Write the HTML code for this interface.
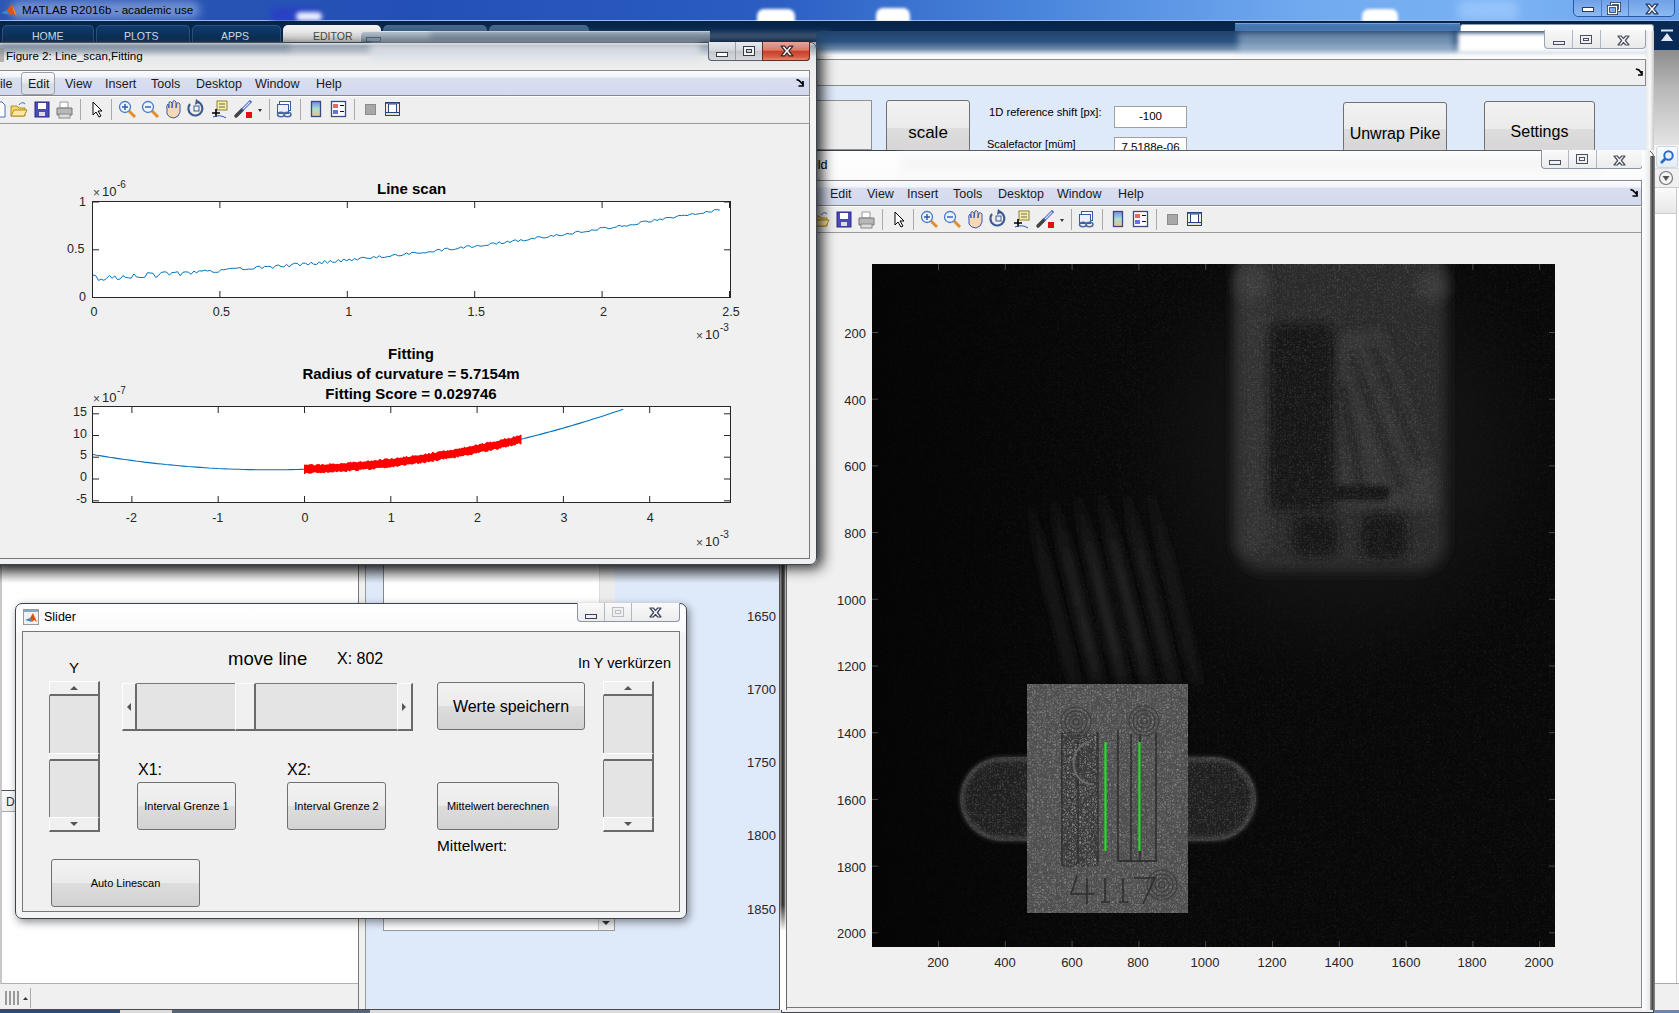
<!DOCTYPE html>
<html><head><meta charset="utf-8">
<style>
*{margin:0;padding:0;box-sizing:border-box}
html,body{width:1679px;height:1013px;overflow:hidden;background:#f0f0f0;font-family:"Liberation Sans",sans-serif;position:relative}
.a{position:absolute}
.t{position:absolute;white-space:nowrap;line-height:1}
svg{position:absolute;overflow:visible}
</style></head><body>

<div class="a" style="left:0px;top:20px;width:1679px;height:1px;background:#9ab8ec"></div>
<div class="a" style="left:0px;top:0px;width:1679px;height:20px;background:linear-gradient(90deg,#2c57b4 0%,#2350b6 25%,#2a5cc2 45%,#4a86dc 62%,#72aaf0 78%,#7ab2f4 90%,#6ca4ec 100%)"></div>
<div class="a" style="left:10px;top:1px;width:190px;height:18px;border-radius:9px;background:rgba(200,215,245,.45);filter:blur(4px)"></div>
<div class="a" style="left:270px;top:8px;width:50px;height:14px;border-radius:7px;background:#2a3cc8;filter:blur(3px);opacity:.8"></div>
<div class="a" style="left:296px;top:12px;width:26px;height:9px;border-radius:5px;background:#e8eeff;filter:blur(2px)"></div>
<div class="a" style="left:757px;top:9px;width:38px;height:14px;border-radius:7px 7px 0 0;background:#fff;filter:blur(1.5px)"></div>
<div class="a" style="left:876px;top:8px;width:34px;height:14px;border-radius:7px 7px 0 0;background:#fff;filter:blur(1.5px)"></div>
<div class="a" style="left:1362px;top:9px;width:36px;height:13px;border-radius:7px 7px 0 0;background:#fff;filter:blur(1.5px)"></div>
<div class="a" style="left:1458px;top:0px;width:60px;height:20px;border-radius:6px;background:#a8d0ff;filter:blur(5px);opacity:.6"></div>
<svg style="left:1px;top:3px" width="18" height="16" viewBox="0 0 18 16"><path d="M0 10 L6 7 L9 12 Z" fill="#3d86cf"/><path d="M6 7 L11 1 L16 14 L12 11 L9 12 Z" fill="#d8541b"/><path d="M11 1 L16 14 L13 9 Z" fill="#f4b02a"/></svg>
<div class="t" style="left:22px;top:4px;font-size:11.6px;color:#000;font-weight:normal;">MATLAB R2016b - academic use</div>
<div class="a" style="left:1573px;top:-3px;width:102px;height:20px;border:1px solid #2a55a8;border-radius:0 0 5px 5px;background:linear-gradient(#6c9ee6,#8dbaf2)"></div>
<div class="a" style="left:1601px;top:0px;width:1px;height:16px;background:#4c78c0"></div>
<div class="a" style="left:1628px;top:0px;width:1px;height:16px;background:#4c78c0"></div>
<div class="a" style="left:1582px;top:7px;width:12px;height:5px;background:#fff;border:1px solid #2b3a5a"></div>
<svg style="left:1607px;top:2px" width="14" height="13" viewBox="0 0 14 13"><rect x="4.5" y="1.5" width="8" height="7" fill="none" stroke="#2b3a5a" stroke-width="3"/><rect x="4.5" y="1.5" width="8" height="7" fill="none" stroke="#fff" stroke-width="1.3"/><rect x="1.5" y="4.5" width="8" height="7" fill="#7aaaf0" stroke="#2b3a5a" stroke-width="3"/><rect x="1.5" y="4.5" width="8" height="7" fill="none" stroke="#fff" stroke-width="1.3"/></svg>
<svg style="left:1645px;top:3px" width="14" height="12" viewBox="-0.5 -0.5 13 11"><path d="M0.5 0.5 H3.8 L6 3.2 L8.2 0.5 H11.5 L7.8 5 L11.5 9.5 H8.2 L6 6.8 L3.8 9.5 H0.5 L4.2 5 Z" fill="#fff" stroke="#2b3a5a" stroke-width="1.2" stroke-linejoin="round"/></svg>
<div class="a" style="left:0px;top:21px;width:1679px;height:21px;background:linear-gradient(#062448,#0a2b52)"></div>
<div class="a" style="left:2px;top:25px;width:92px;height:17px;border-radius:5px 5px 0 0;background:linear-gradient(#0f3a68,#0b305a);border:1px solid #2a5683;border-bottom:none"></div>
<div class="t" style="left:32px;top:31px;font-size:10.5px;color:#dfe6ee;font-weight:normal;">HOME</div>
<div class="a" style="left:96px;top:25px;width:94px;height:17px;border-radius:5px 5px 0 0;background:linear-gradient(#0f3a68,#0b305a);border:1px solid #2a5683;border-bottom:none"></div>
<div class="t" style="left:124px;top:31px;font-size:10.5px;color:#dfe6ee;font-weight:normal;">PLOTS</div>
<div class="a" style="left:192px;top:25px;width:89px;height:17px;border-radius:5px 5px 0 0;background:linear-gradient(#0f3a68,#0b305a);border:1px solid #2a5683;border-bottom:none"></div>
<div class="t" style="left:221px;top:31px;font-size:10.5px;color:#dfe6ee;font-weight:normal;">APPS</div>
<div class="a" style="left:283px;top:25px;width:98px;height:17px;border-radius:5px 5px 0 0;background:linear-gradient(#f4f4f4,#dadada)"></div>
<div class="t" style="left:313px;top:31px;font-size:10.5px;color:#4a4a4a;font-weight:normal;">EDITOR</div>
<div class="a" style="left:383px;top:25px;width:104px;height:8px;border-radius:5px 5px 0 0;background:linear-gradient(#47698e,#3a5a7e)"></div>
<div class="a" style="left:489px;top:25px;width:100px;height:8px;border-radius:5px 5px 0 0;background:linear-gradient(#47698e,#3a5a7e)"></div>
<div class="a" style="left:360px;top:31px;width:350px;height:11px;border-radius:5px 0 0 0;border-top:1px solid #dfe6ee;border-left:1px solid #dfe6ee;background:linear-gradient(#b8c4d0,#8898aa)"></div>
<div class="a" style="left:430px;top:33px;width:400px;height:7px;background:#6a7e96;filter:blur(3px);opacity:.7"></div>
<div class="a" style="left:366px;top:37px;width:15px;height:5px;background:#8aa6c4;border:1px solid #5a6a7a"></div>
<div class="a" style="left:0px;top:565px;width:358px;height:419px;background:#fff;border-left:2px solid #c8c8c8;border-bottom:1px solid #b0b0b0"></div>
<div class="a" style="left:0px;top:984px;width:358px;height:25px;background:#f0f0f0"></div>
<svg style="left:4px;top:990px" width="26" height="16" viewBox="0 0 26 16"><path d="M2 1V15M6 1V15M10 1V15M14 1V15" stroke="#9a9a9a" stroke-width="2"/><path d="M19 10 L24 10 L21.5 7 Z" fill="#333"/></svg>
<div class="a" style="left:30px;top:988px;width:1px;height:20px;background:#aaa"></div>
<div class="a" style="left:1px;top:790px;width:14px;height:22px;background:linear-gradient(#fafafa,#f0f0f0);border-top:1px solid #555;border-bottom:1px solid #aaa;border-left:1px solid #ccc"></div>
<div class="t" style="left:6px;top:796px;font-size:12px;color:#333;font-weight:normal;">D</div>
<div class="a" style="left:358px;top:565px;width:8px;height:445px;background:#f0f0f0;border-left:1px solid #777;border-right:1px solid #999"></div>
<div class="a" style="left:366px;top:565px;width:414px;height:445px;background:#dee9fa"></div>
<div class="a" style="left:383px;top:565px;width:216px;height:365px;background:#fff;border-left:1px solid #888"></div>
<div class="a" style="left:599px;top:565px;width:16px;height:365px;background:#ececec;border-left:1px solid #ddd"></div>
<div class="a" style="left:383px;top:918px;width:232px;height:13px;background:linear-gradient(#f4f4f4,#fff);border:1px solid #999;border-top:none"></div>
<div class="a" style="left:598px;top:918px;width:17px;height:13px;background:#f0f0f0;border-left:1px solid #ccc;border-bottom:1px solid #999;border-right:1px solid #999"></div>
<svg style="left:602px;top:921px" width="9" height="5"><path d="M0 0H8L4 4Z" fill="#333"/></svg>
<div class="t" style="left:730px;top:609.5px;width:46px;text-align:right;font-size:13px;color:#262626">1650</div>
<div class="t" style="left:730px;top:682.8px;width:46px;text-align:right;font-size:13px;color:#262626">1700</div>
<div class="t" style="left:730px;top:756.1px;width:46px;text-align:right;font-size:13px;color:#262626">1750</div>
<div class="t" style="left:730px;top:829.4px;width:46px;text-align:right;font-size:13px;color:#262626">1800</div>
<div class="t" style="left:730px;top:902.7px;width:46px;text-align:right;font-size:13px;color:#262626">1850</div>
<div class="a" style="left:779px;top:565px;width:8px;height:445px;background:linear-gradient(90deg,#aaa,#333 30%,#555 70%,#ddd)"></div>
<div class="a" style="left:780px;top:930px;width:6px;height:80px;background:linear-gradient(90deg,#eee,#fff)"></div>
<div class="a" style="left:0px;top:565px;width:816px;height:18px;background:linear-gradient(rgba(0,0,0,.45),rgba(0,0,0,0));"></div>
<div class="a" style="left:0px;top:1009px;width:1679px;height:4px;background:#dcdcdc;border-top:1px solid #4a4a4a"></div>
<div class="a" style="left:0px;top:1010px;width:120px;height:3px;background:#2a4a7a"></div>
<div class="a" style="left:172px;top:1010px;width:198px;height:3px;background:#56657a"></div>
<div class="a" style="left:1640px;top:1010px;width:39px;height:3px;background:#6a86b0"></div>
<div class="a" style="left:1235px;top:23px;width:225px;height:9px;background:linear-gradient(#4a7cb8,#3a6aa4);border-top:1px solid #7aa0d0"></div>
<div class="a" style="left:1460px;top:24px;width:194px;height:8px;background:#fff;border:1px solid #8a9ab0;border-bottom:none;border-radius:3px 3px 0 0"></div>
<div class="a" style="left:816px;top:31px;width:838px;height:30px;border-radius:6px 6px 0 0;background:linear-gradient(#20426c 0%,#2b5280 35%,#6d8aaa 60%,#f4f6f8 80%,#ffffff 100%)"></div>
<div class="a" style="left:1238px;top:33px;width:216px;height:20px;background:rgba(200,220,240,.45);filter:blur(3px)"></div>
<div class="a" style="left:1458px;top:33px;width:190px;height:20px;background:#fff;filter:blur(2px)"></div>
<div class="a" style="left:1544px;top:30px;width:102px;height:19px;border:1px solid #98a4b4;border-top:none;border-radius:0 0 4px 4px;background:linear-gradient(#f8f8f8,#eaeaea)"></div>
<div class="a" style="left:1572px;top:30px;width:1px;height:18px;background:#b0b8c4"></div>
<div class="a" style="left:1600px;top:30px;width:1px;height:18px;background:#b0b8c4"></div>
<div class="a" style="left:1553px;top:41px;width:12px;height:4px;border:1px solid #4a5060"></div>
<div class="a" style="left:1580px;top:35px;width:12px;height:9px;border:1px solid #4a5060;box-shadow:inset 0 0 0 2px #f0f0f0,inset 0 0 0 3px #4a5060"></div>
<svg style="left:1617px;top:35px" width="13" height="11" viewBox="-0.5 -0.5 13 11"><path d="M0.5 0.5 H3.8 L6 3.2 L8.2 0.5 H11.5 L7.8 5 L11.5 9.5 H8.2 L6 6.8 L3.8 9.5 H0.5 L4.2 5 Z" fill="#fff" stroke="#4a5060" stroke-width="1.2" stroke-linejoin="round"/></svg>
<div class="a" style="left:816px;top:59px;width:830px;height:27px;background:#efefef;border-top:1px solid #8a8a8a;border-bottom:1px solid #8a8a8a;border-right:1px solid #8a8a8a"></div>
<svg style="left:1636px;top:69px" width="8" height="7" viewBox="0 0 8 7"><path d="M0 0 L3 1 L6 5 M6 2 V6 H2" stroke="#000" stroke-width="1.6" fill="none"/></svg>
<div class="a" style="left:816px;top:86px;width:830px;height:64px;background:#dee9fa"></div>
<div class="a" style="left:1646px;top:31px;width:8px;height:119px;background:linear-gradient(90deg,#e8e8e8,#fafafa,#c8c8c8)"></div>
<div class="a" style="left:815px;top:100px;width:57px;height:50px;border:1px solid #909090;border-left:none;background:#eeeeee"></div>
<div class="a" style="left:886px;top:100px;width:84px;height:56px;border:1px solid #707070;border-radius:3px;background:linear-gradient(#f2f2f2 0%,#ebebeb 50%,#dddddd 51%,#d4d4d4 100%);"></div>
<div class="t" style="left:886px;top:124px;width:84px;text-align:center;font-size:17px;color:#000">scale</div>
<div class="t" style="left:989px;top:107px;font-size:11.2px;color:#000;font-weight:normal;">1D reference shift [px]:</div>
<div class="a" style="left:1114px;top:106px;width:73px;height:22px;background:#fff;border:1px solid #a0a0a0"></div>
<div class="t" style="left:1114px;top:111px;width:73px;text-align:center;font-size:11.5px">-100</div>
<div class="t" style="left:987px;top:139px;font-size:11px;color:#000;font-weight:normal;">Scalefactor [m&uuml;m]</div>
<div class="a" style="left:1114px;top:137px;width:73px;height:16px;background:#fff;border:1px solid #a0a0a0"></div>
<div class="t" style="left:1114px;top:142px;width:73px;text-align:center;font-size:11.5px">7.5188e-06</div>
<div class="a" style="left:1343px;top:102px;width:104px;height:54px;border:1px solid #707070;border-radius:3px;background:linear-gradient(#f2f2f2 0%,#ebebeb 50%,#dddddd 51%,#d4d4d4 100%);"></div>
<div class="t" style="left:1343px;top:126px;width:104px;text-align:center;font-size:16px;color:#000">Unwrap Pike</div>
<div class="a" style="left:1484px;top:101px;width:111px;height:55px;border:1px solid #707070;border-radius:3px;background:linear-gradient(#f2f2f2 0%,#ebebeb 50%,#dddddd 51%,#d4d4d4 100%);"></div>
<div class="t" style="left:1484px;top:124px;width:111px;text-align:center;font-size:16px;color:#000">Settings</div>
<div class="a" style="left:1654px;top:21px;width:25px;height:29px;background:#082a55"></div>
<svg style="left:1660px;top:29px" width="14" height="13" viewBox="0 0 14 13"><path d="M1 1.5H13" stroke="#dfe8f2" stroke-width="2"/><path d="M7 4 L13 12 H1 Z" fill="#dfe8f2"/></svg>
<div class="a" style="left:1654px;top:50px;width:25px;height:95px;background:linear-gradient(#8c8c8c,#b8b8b8 40%,#e4e4e4)"></div>
<div class="a" style="left:1654px;top:145px;width:25px;height:30px;background:#f4f4f4"></div>
<div class="a" style="left:1656px;top:146px;width:22px;height:22px;border:1px solid #cfd6de;border-radius:3px;background:linear-gradient(#f8fbff,#e4ecf6)"></div>
<svg style="left:1659px;top:149px" width="16" height="16" viewBox="0 0 16 16"><circle cx="9.5" cy="6.5" r="4.2" stroke="#2a6cc8" stroke-width="2" fill="#eaf2ff"/><path d="M6.5 9.5 L2 14" stroke="#2a6cc8" stroke-width="2.6"/></svg>
<div class="a" style="left:1654px;top:168px;width:25px;height:20px;background:#f0f0f0;border-top:1px solid #ddd;border-bottom:1px solid #ccc"></div>
<svg style="left:1658px;top:170px" width="16" height="16" viewBox="0 0 16 16"><circle cx="8" cy="8" r="6.5" stroke="#777" stroke-width="1.2" fill="#f4f4f4"/><path d="M4.5 6 H11.5 L8 11 Z" fill="#555"/></svg>
<div class="a" style="left:1654px;top:188px;width:25px;height:795px;background:#fff;border-left:1px solid #bbb"></div>
<div class="a" style="left:1655px;top:188px;width:22px;height:26px;background:linear-gradient(#fafafa,#e8e8e8);border-bottom:1px solid #ccc;border-right:1px solid #ccc"></div>
<div class="a" style="left:1676px;top:188px;width:1px;height:795px;background:#c8c8c8"></div>
<div class="a" style="left:1654px;top:983px;width:25px;height:27px;background:#f0f0f0;border-top:1px solid #aaa"></div>
<div class="a" style="left:781px;top:150px;width:873px;height:863px;border:1px solid #3c4450;border-radius:7px 7px 0 0;background:linear-gradient(#ffffff 0px,#fbfbfb 28px,#f0f0f0 30px)"></div>
<div class="a" style="left:900px;top:155px;width:700px;height:18px;background:#f6f6f6;filter:blur(4px)"></div>
<div class="t" style="left:815px;top:159px;font-size:12.5px;color:#000;font-weight:normal;">ild</div>
<div class="a" style="left:1541px;top:150px;width:102px;height:19px;border:1px solid #8a94a4;border-top:none;border-radius:0 0 4px 4px;background:linear-gradient(#fafafa,#ececec)"></div>
<div class="a" style="left:1568px;top:150px;width:1px;height:18px;background:#b0b8c4"></div>
<div class="a" style="left:1596px;top:150px;width:1px;height:18px;background:#b0b8c4"></div>
<div class="a" style="left:1549px;top:160px;width:12px;height:5px;border:1px solid #4a5060"></div>
<div class="a" style="left:1576px;top:154px;width:12px;height:10px;border:1px solid #4a5060;box-shadow:inset 0 0 0 2px #f0f0f0,inset 0 0 0 3px #4a5060"></div>
<svg style="left:1613px;top:155px" width="13" height="11" viewBox="-0.5 -0.5 13 11"><path d="M0.5 0.5 H3.8 L6 3.2 L8.2 0.5 H11.5 L7.8 5 L11.5 9.5 H8.2 L6 6.8 L3.8 9.5 H0.5 L4.2 5 Z" fill="#fff" stroke="#4a5060" stroke-width="1.2" stroke-linejoin="round"/></svg>
<div class="a" style="left:787px;top:180px;width:855px;height:26px;border:1px solid #888;border-left:none;background:linear-gradient(#fafbfe 0%,#f2f4fa 25%,#d8ddef 30%,#d4daee 100%)"></div>
<div class="t" style="left:802px;top:188px;font-size:12.5px;color:#1a1a1a;font-weight:normal;">ile</div>
<div class="t" style="left:830px;top:188px;font-size:12.5px;color:#1a1a1a;font-weight:normal;">Edit</div>
<div class="t" style="left:867px;top:188px;font-size:12.5px;color:#1a1a1a;font-weight:normal;">View</div>
<div class="t" style="left:907px;top:188px;font-size:12.5px;color:#1a1a1a;font-weight:normal;">Insert</div>
<div class="t" style="left:953px;top:188px;font-size:12.5px;color:#1a1a1a;font-weight:normal;">Tools</div>
<div class="t" style="left:998px;top:188px;font-size:12.5px;color:#1a1a1a;font-weight:normal;">Desktop</div>
<div class="t" style="left:1057px;top:188px;font-size:12.5px;color:#1a1a1a;font-weight:normal;">Window</div>
<div class="t" style="left:1118px;top:188px;font-size:12.5px;color:#1a1a1a;font-weight:normal;">Help</div>
<svg style="left:1630px;top:189px" width="9" height="8" viewBox="0 0 9 8"><path d="M0.5 0.5 L3 1.5 L7 5.5 M7 2 V7 H2.5" stroke="#000" stroke-width="1.7" fill="none"/></svg>
<div class="a" style="left:787px;top:206px;width:855px;height:27px;background:#efefef;border-top:1px solid #fff;border-right:1px solid #888;border-bottom:1px solid #9a9a9a"></div>
<svg style="left:802px;top:110px" width="420" height="130"><path d="M-6 102 H2 L5 105 V117 H-6 Z" fill="#fff" stroke="#4a6fa8" stroke-width="1"/><path d="M11 106 H17 L19 108 H25 V116 H11 Z" fill="#f6d66a" stroke="#b08a20" stroke-width="1"/><path d="M11 116 L14 110 H27 L24 116 Z" fill="#fbe9a0" stroke="#b08a20" stroke-width="1"/><path d="M19 105 Q22 101 25 104" stroke="#6a8ab8" stroke-width="1.2" fill="none"/><rect x="35" y="102" width="14" height="15" fill="#4a4ab8" stroke="#2a2a7a"/><rect x="38" y="103" width="8" height="6" fill="#fff"/><rect x="39" y="112" width="6" height="4" fill="#ddd"/><path d="M60 102 H68 V108 H60 Z" fill="#fff" stroke="#999"/><path d="M57 108 H72 V115 H57 Z" fill="#b8b8b8" stroke="#777"/><rect x="59" y="114" width="11" height="4" fill="#ddd" stroke="#888"/><path d="M80.5 99 V120" stroke="#aaa"/><path d="M93 102 V115 L96 112 L99 117 L101 116 L98 111 L102 111 Z" fill="#fff" stroke="#000" stroke-width="1"/><path d="M111.5 99 V120" stroke="#aaa"/><path d="M129 111 L135 117" stroke="#e0902a" stroke-width="3"/><circle cx="125" cy="107" r="5.5" fill="#eef4ff" stroke="#4a7ac8" stroke-width="1.3"/><path d="M122 107 H128 M125 104 V110" stroke="#2a5ab0" stroke-width="1.4"/><path d="M152 111 L158 117" stroke="#e0902a" stroke-width="3"/><circle cx="148" cy="107" r="5.5" fill="#eef4ff" stroke="#4a7ac8" stroke-width="1.3"/><path d="M145 107 H151" stroke="#2a5ab0" stroke-width="1.4"/><path d="M167 110 Q166 105 168 104 L169 108 L169 102 Q171 101 172 103 L172 108 L173 101 Q175 100 176 102 L176 108 L177 103 Q179 102 180 104 L180 112 Q179 117 174 118 Q169 118 167 114 Z" fill="#f6d8b8" stroke="#3a5ab0" stroke-width="1"/><path d="M190 104 A7 7 0 1 0 198 102" stroke="#3a5a90" stroke-width="2.2" fill="none"/><path d="M196 99 L200 102 L195 105 Z" fill="#3a5a90"/><rect x="194" y="106" width="5" height="5" fill="none" stroke="#3a5a90"/><rect x="217" y="101" width="10" height="9" fill="#f8f0a0" stroke="#8a8040"/><path d="M219 104 H225 M219 107 H225" stroke="#666"/><path d="M212 113 H220 M216 109 V117" stroke="#000" stroke-width="1.6"/><path d="M213 117 Q220 114 226 118" stroke="#3050c0" fill="none"/><path d="M236 116 L242 110" stroke="#444" stroke-width="3.5" stroke-linecap="round"/><path d="M242 110 L251 101" stroke="#3a5ab8" stroke-width="3"/><path d="M243 109 L250 102" stroke="#dfe6ff" stroke-width="1.2"/><rect x="246" y="112" width="6" height="6" fill="#e01010"/><path d="M258 109 H262 L260 112 Z" fill="#333"/><path d="M269.5 99 V120" stroke="#aaa"/><rect x="279.5" y="101.5" width="11" height="9" fill="#fff" stroke="#3a5a98"/><rect x="277.5" y="104.5" width="11" height="9" fill="#eef" stroke="#3a5a98"/><ellipse cx="281" cy="114.5" rx="3.5" ry="2.2" fill="none" stroke="#4a6aa8" stroke-width="1.5"/><ellipse cx="287.5" cy="114.5" rx="3.5" ry="2.2" fill="none" stroke="#4a6aa8" stroke-width="1.5"/><path d="M300.5 99 V120" stroke="#aaa"/><defs><linearGradient id="cb802" x1="0" y1="0" x2="0" y2="1"><stop offset="0" stop-color="#7a88e8"/><stop offset=".5" stop-color="#a8e0d0"/><stop offset="1" stop-color="#f4c080"/></linearGradient></defs><rect x="311.5" y="101.5" width="9" height="15" fill="url(#cb802)" stroke="#3a4a80" stroke-width="1.3"/><rect x="331.5" y="101.5" width="14" height="15" fill="#fff" stroke="#3a4a80" stroke-width="1.3"/><rect x="333" y="104" width="5" height="4" fill="#e06a6a"/><rect x="333" y="110" width="5" height="4" fill="#6a70e0"/><path d="M340 105.5 H344 M340 111.5 H344" stroke="#111" stroke-width="1.2"/><path d="M354.5 99 V120" stroke="#aaa"/><rect x="365.5" y="104.5" width="10" height="10" fill="#a8a8a8" stroke="#8c8c8c"/><rect x="385" y="102" width="15" height="14" fill="#2a4080"/><rect x="386" y="103" width="13" height="1" fill="#4a70c8"/><rect x="386" y="104" width="2" height="8" fill="#f4f0e0"/><rect x="397" y="104" width="2" height="8" fill="#f4f0e0"/><rect x="389" y="104.5" width="7" height="7.5" fill="#fff"/><rect x="386" y="113" width="13" height="2" fill="#e8e0c0"/></svg>
<div class="a" style="left:787px;top:233px;width:855px;height:775px;background:#f0f0f0;border-right:1px solid #888;border-bottom:1px solid #777"></div>
<div class="a" style="left:1642px;top:150px;width:8px;height:860px;background:linear-gradient(90deg,#fff,#f4f6f8 50%,#e8e8e8)"></div>
<div class="a" style="left:1650px;top:156px;width:5px;height:854px;background:linear-gradient(90deg,#999,#4a4a4a 50%,#888)"></div>
<div class="a" style="left:779px;top:560px;width:8px;height:450px;border-left:1px solid #555;border-right:1px solid #666;background:#fff"></div>
<div class="a" style="left:780px;top:560px;width:6px;height:371px;background:linear-gradient(90deg,#999,#333 40%,#444 70%,#ddd)"></div>
<div class="a" style="left:780px;top:905px;width:6px;height:26px;background:linear-gradient(rgba(255,255,255,0),#fff)"></div>
<svg style="left:872px;top:264px" width="683" height="683"><defs><filter id="b2" filterUnits="userSpaceOnUse" x="-200" y="-200" width="1100" height="1100"><feGaussianBlur stdDeviation="2"/></filter><filter id="b6" filterUnits="userSpaceOnUse" x="-200" y="-200" width="1100" height="1100"><feGaussianBlur stdDeviation="6"/></filter><filter id="b15" filterUnits="userSpaceOnUse" x="-200" y="-200" width="1100" height="1100"><feGaussianBlur stdDeviation="15"/></filter><filter id="b30" filterUnits="userSpaceOnUse" x="-200" y="-200" width="1100" height="1100"><feGaussianBlur stdDeviation="30"/></filter><filter id="nz" x="0" y="0" width="100%" height="100%"><feTurbulence type="fractalNoise" baseFrequency="0.9" numOctaves="1" seed="3"/><feColorMatrix type="matrix" values="0 0 0 0 1  0 0 0 0 1  0 0 0 0 1  1.2 0 0 0 -0.55"/></filter><clipPath id="ic"><rect x="0" y="0" width="683" height="683"/></clipPath></defs><g clip-path="url(#ic)"><rect x="0" y="0" width="683" height="683" fill="#080808"/><filter id="tx" x="0" y="0" width="100%" height="100%"><feTurbulence type="turbulence" baseFrequency="0.4" numOctaves="2" seed="5" result="n"/><feColorMatrix in="n" type="matrix" values="0 0 0 0 1  0 0 0 0 1  0 0 0 0 1  0 0 0 1.8 -0.3" result="w"/><feComposite in="w" in2="SourceGraphic" operator="in"/></filter><filter id="b4" filterUnits="userSpaceOnUse" x="-200" y="-200" width="1100" height="1100"><feGaussianBlur stdDeviation="4"/></filter><rect x="0" y="0" width="683" height="683" fill="#fff" opacity=".05" filter="url(#tx)"/><linearGradient id="lg" x1="0" x2="1" y1="0" y2="0"><stop offset="0" stop-color="#030303" stop-opacity=".7"/><stop offset="1" stop-color="#030303" stop-opacity="0"/></linearGradient><rect x="0" y="0" width="260" height="683" fill="url(#lg)"/><radialGradient id="gl"><stop offset="0" stop-color="#1a1a1a" stop-opacity="1"/><stop offset=".6" stop-color="#161616" stop-opacity=".6"/><stop offset="1" stop-color="#111" stop-opacity="0"/></radialGradient><ellipse cx="470" cy="190" rx="230" ry="240" fill="url(#gl)"/><rect x="362" y="-40" width="213" height="348" rx="30" fill="#2a2a2a" filter="url(#b6)"/><rect x="366" y="0" width="30" height="290" rx="10" fill="#333" filter="url(#b6)"/><circle cx="380" cy="20" r="16" fill="#3a3a3a" filter="url(#b6)"/><circle cx="560" cy="22" r="16" fill="#383838" filter="url(#b6)"/><rect x="398" y="60" width="64" height="186" rx="10" fill="#151515" filter="url(#b4)"/><path d="M468 70 L510 65 L565 215 L565 245 L468 245 Z" fill="#363636" filter="url(#b4)"/><path d="M480 90 L530 225 M500 80 L548 200 M470 120 L490 230" stroke="#1c1c1c" stroke-width="6" filter="url(#b4)"/><rect x="420" y="252" width="45" height="40" rx="12" fill="#151515" filter="url(#b4)"/><rect x="490" y="250" width="45" height="45" rx="12" fill="#161616" filter="url(#b4)"/><rect x="458" y="222" width="60" height="14" rx="6" fill="#121212" filter="url(#b2)"/><mask id="gm" maskUnits="userSpaceOnUse" x="0" y="0" width="683" height="683"><rect x="368" y="-30" width="200" height="330" rx="30" fill="#fff" filter="url(#b6)"/></mask><rect x="340" y="0" width="260" height="340" fill="#fff" opacity=".12" filter="url(#tx)" mask="url(#gm)"/><linearGradient id="sg" x1="0" y1="0" x2="0" y2="1"><stop offset="0" stop-color="#2a2a2a" stop-opacity="0"/><stop offset=".35" stop-color="#2a2a2a" stop-opacity=".9"/><stop offset=".8" stop-color="#2a2a2a" stop-opacity="1"/><stop offset="1" stop-color="#2a2a2a" stop-opacity=".6"/></linearGradient><g filter="url(#b4)"><path d="M150 232 L161 232 L208 420 L197 420 Z" fill="url(#sg)" opacity="0.55"/><path d="M174 229 L185 229 L232 420 L221 420 Z" fill="url(#sg)" opacity="0.80"/><path d="M198 226 L209 226 L257 420 L246 420 Z" fill="url(#sg)" opacity="0.85"/><path d="M222 223 L233 223 L282 420 L271 420 Z" fill="url(#sg)" opacity="0.85"/><path d="M246 220 L257 220 L307 420 L296 420 Z" fill="url(#sg)" opacity="0.70"/><path d="M270 217 L281 217 L331 420 L320 420 Z" fill="url(#sg)" opacity="0.50"/></g><rect x="88" y="493" width="112" height="84" rx="42" fill="#1e1e1e"/><rect x="272" y="493" width="112" height="84" rx="42" fill="#1e1e1e"/><rect x="90" y="495" width="108" height="80" rx="40" fill="none" stroke="#444" stroke-width="4" filter="url(#b2)"/><rect x="274" y="495" width="108" height="80" rx="40" fill="none" stroke="#444" stroke-width="4" filter="url(#b2)"/><rect x="88" y="493" width="112" height="84" rx="42" fill="#fff" opacity=".18" filter="url(#tx)"/><rect x="272" y="493" width="112" height="84" rx="42" fill="#fff" opacity=".18" filter="url(#tx)"/><rect x="155" y="420" width="161" height="229" fill="#4e4e4e"/><rect x="155" y="420" width="161" height="229" fill="#000" opacity=".30" filter="url(#tx)"/><rect x="189" y="468" width="37" height="135" fill="#3a3a3a"/><rect x="189" y="468" width="37" height="135" fill="#8a8a8a" opacity=".45" filter="url(#tx)"/><path d="M190 468 V602 M206 470 V600 M226 468 V602" stroke="#2a2a2a" stroke-width="1.2"/><path d="M218 478 A14 16 0 0 0 222 520" stroke="#6a6a6a" stroke-width="2" fill="none"/><path d="M246 466 V597 H284 V468 M259 470 V597 M268 470 V597" stroke="#262626" stroke-width="1.3" fill="none"/><circle cx="204" cy="458" r="3" fill="none" stroke="#3c3c3c" stroke-width="1.1"/><circle cx="204" cy="458" r="7" fill="none" stroke="#3c3c3c" stroke-width="1.1"/><circle cx="204" cy="458" r="11" fill="none" stroke="#3c3c3c" stroke-width="1.1"/><circle cx="204" cy="458" r="15" fill="none" stroke="#3c3c3c" stroke-width="1.1"/><circle cx="272" cy="457" r="3" fill="none" stroke="#3c3c3c" stroke-width="1.1"/><circle cx="272" cy="457" r="7" fill="none" stroke="#3c3c3c" stroke-width="1.1"/><circle cx="272" cy="457" r="11" fill="none" stroke="#3c3c3c" stroke-width="1.1"/><circle cx="272" cy="457" r="15" fill="none" stroke="#3c3c3c" stroke-width="1.1"/><circle cx="290" cy="621" r="3" fill="none" stroke="#3c3c3c" stroke-width="1.1"/><circle cx="290" cy="621" r="7" fill="none" stroke="#3c3c3c" stroke-width="1.1"/><circle cx="290" cy="621" r="11" fill="none" stroke="#3c3c3c" stroke-width="1.1"/><circle cx="290" cy="621" r="15" fill="none" stroke="#3c3c3c" stroke-width="1.1"/><path d="M205 612 L199 630 H222 M215 614 V640 M233 614 V638 M229 638 H238 M251 614 V638 M247 638 H256 M262 614 H283 L271 640" stroke="#2e2e2e" stroke-width="1.6" fill="none"/><path d="M233.5 478 V587 M267.5 478 V587" stroke="#22e022" stroke-width="2.2"/><path d="M0 68.5 H6 M683 68.5 H677 M66.5 683 V677 M66.5 0 V6" stroke="#4a4a4a" stroke-width="1"/><path d="M0 135.2 H6 M683 135.2 H677 M133.3 683 V677 M133.3 0 V6" stroke="#4a4a4a" stroke-width="1"/><path d="M0 201.9 H6 M683 201.9 H677 M200.1 683 V677 M200.1 0 V6" stroke="#4a4a4a" stroke-width="1"/><path d="M0 268.6 H6 M683 268.6 H677 M266.9 683 V677 M266.9 0 V6" stroke="#4a4a4a" stroke-width="1"/><path d="M0 335.3 H6 M683 335.3 H677 M333.7 683 V677 M333.7 0 V6" stroke="#4a4a4a" stroke-width="1"/><path d="M0 402.0 H6 M683 402.0 H677 M400.5 683 V677 M400.5 0 V6" stroke="#4a4a4a" stroke-width="1"/><path d="M0 468.7 H6 M683 468.7 H677 M467.3 683 V677 M467.3 0 V6" stroke="#4a4a4a" stroke-width="1"/><path d="M0 535.4 H6 M683 535.4 H677 M534.1 683 V677 M534.1 0 V6" stroke="#4a4a4a" stroke-width="1"/><path d="M0 602.1 H6 M683 602.1 H677 M600.9 683 V677 M600.9 0 V6" stroke="#4a4a4a" stroke-width="1"/><path d="M0 668.8 H6 M683 668.8 H677 M667.7 683 V677 M667.7 0 V6" stroke="#4a4a4a" stroke-width="1"/></g></svg>
<div class="t" style="left:819px;top:327px;width:47px;text-align:right;font-size:13px;color:#262626">200</div>
<div class="t" style="left:913px;top:956px;width:50px;text-align:center;font-size:13px;color:#262626">200</div>
<div class="t" style="left:819px;top:394px;width:47px;text-align:right;font-size:13px;color:#262626">400</div>
<div class="t" style="left:980px;top:956px;width:50px;text-align:center;font-size:13px;color:#262626">400</div>
<div class="t" style="left:819px;top:460px;width:47px;text-align:right;font-size:13px;color:#262626">600</div>
<div class="t" style="left:1047px;top:956px;width:50px;text-align:center;font-size:13px;color:#262626">600</div>
<div class="t" style="left:819px;top:527px;width:47px;text-align:right;font-size:13px;color:#262626">800</div>
<div class="t" style="left:1113px;top:956px;width:50px;text-align:center;font-size:13px;color:#262626">800</div>
<div class="t" style="left:819px;top:594px;width:47px;text-align:right;font-size:13px;color:#262626">1000</div>
<div class="t" style="left:1180px;top:956px;width:50px;text-align:center;font-size:13px;color:#262626">1000</div>
<div class="t" style="left:819px;top:660px;width:47px;text-align:right;font-size:13px;color:#262626">1200</div>
<div class="t" style="left:1247px;top:956px;width:50px;text-align:center;font-size:13px;color:#262626">1200</div>
<div class="t" style="left:819px;top:727px;width:47px;text-align:right;font-size:13px;color:#262626">1400</div>
<div class="t" style="left:1314px;top:956px;width:50px;text-align:center;font-size:13px;color:#262626">1400</div>
<div class="t" style="left:819px;top:794px;width:47px;text-align:right;font-size:13px;color:#262626">1600</div>
<div class="t" style="left:1381px;top:956px;width:50px;text-align:center;font-size:13px;color:#262626">1600</div>
<div class="t" style="left:819px;top:861px;width:47px;text-align:right;font-size:13px;color:#262626">1800</div>
<div class="t" style="left:1447px;top:956px;width:50px;text-align:center;font-size:13px;color:#262626">1800</div>
<div class="t" style="left:819px;top:927px;width:47px;text-align:right;font-size:13px;color:#262626">2000</div>
<div class="t" style="left:1514px;top:956px;width:50px;text-align:center;font-size:13px;color:#262626">2000</div>
<div class="a" style="left:-10px;top:42px;width:827px;height:523px;box-shadow:5px 3px 14px rgba(0,0,0,.85);border:1px solid #3c4450;border-radius:0 7px 7px 0;background:linear-gradient(#dfe3e8 0px,#9aa6b4 3px,#b4bec8 8px,#e6e8ea 14px,#eeeeee 26px,#f4f4f4 60px,#f0f0f0 100%)"></div>
<div class="a" style="left:0px;top:43px;width:290px;height:8px;background:#6a7a8a;filter:blur(3px);opacity:.5"></div>
<div class="a" style="left:370px;top:44px;width:330px;height:16px;background:#dde2e8;filter:blur(3px);opacity:.8"></div>
<div class="t" style="left:6px;top:50px;font-size:11.6px;color:#000;font-weight:normal;">Figure 2: Line_scan,Fitting</div>
<div class="a" style="left:0px;top:48px;width:4px;height:14px;background:#888;opacity:.6"></div>
<div class="a" style="left:708px;top:42px;width:102px;height:19px;border:1px solid #5a6070;border-top:none;border-radius:0 0 4px 4px;background:linear-gradient(#e6e8ec,#d2d6dc 50%,#c4c8ce 52%,#d6d8dc)"></div>
<div class="a" style="left:762px;top:42px;width:48px;height:19px;border:1px solid #6a2a20;border-top:none;border-radius:0 0 4px 0;background:linear-gradient(#e8a598 0%,#dc7a66 45%,#c8402a 52%,#d45a40 80%,#e08a70 100%)"></div>
<div class="a" style="left:735px;top:42px;width:1px;height:18px;background:#9aa0a8"></div>
<div class="a" style="left:716px;top:52px;width:12px;height:5px;border:1px solid #333a48;background:#fff"></div>
<div class="a" style="left:743px;top:46px;width:12px;height:10px;border:1px solid #333a48;box-shadow:inset 0 0 0 2px #f0f0f0,inset 0 0 0 3px #333a48"></div>
<svg style="left:780px;top:45px" width="14" height="12" viewBox="-0.5 -0.5 13 11"><path d="M0.5 0.5 H3.8 L6 3.2 L8.2 0.5 H11.5 L7.8 5 L11.5 9.5 H8.2 L6 6.8 L3.8 9.5 H0.5 L4.2 5 Z" fill="#fff" stroke="#3a2a2a" stroke-width="1.2" stroke-linejoin="round"/></svg>
<div class="a" style="left:0px;top:70px;width:810px;height:26px;border:1px solid #888;border-left:none;background:linear-gradient(#fafbfe 0%,#f2f4fa 25%,#d8ddef 30%,#d4daee 100%)"></div>
<div class="a" style="left:21px;top:72px;width:34px;height:23px;border:1px solid #9aa0b0;border-radius:3px;background:linear-gradient(#fbfbfc,#e8e8ee 45%,#d8dae4 55%,#dcdee8)"></div>
<div class="t" style="left:0px;top:78px;font-size:12.5px;color:#1a1a1a;font-weight:normal;">ile</div>
<div class="t" style="left:28px;top:78px;font-size:12.5px;color:#1a1a1a;font-weight:normal;">Edit</div>
<div class="t" style="left:65px;top:78px;font-size:12.5px;color:#1a1a1a;font-weight:normal;">View</div>
<div class="t" style="left:105px;top:78px;font-size:12.5px;color:#1a1a1a;font-weight:normal;">Insert</div>
<div class="t" style="left:151px;top:78px;font-size:12.5px;color:#1a1a1a;font-weight:normal;">Tools</div>
<div class="t" style="left:196px;top:78px;font-size:12.5px;color:#1a1a1a;font-weight:normal;">Desktop</div>
<div class="t" style="left:255px;top:78px;font-size:12.5px;color:#1a1a1a;font-weight:normal;">Window</div>
<div class="t" style="left:316px;top:78px;font-size:12.5px;color:#1a1a1a;font-weight:normal;">Help</div>
<svg style="left:796px;top:79px" width="9" height="8" viewBox="0 0 9 8"><path d="M0.5 0.5 L3 1.5 L7 5.5 M7 2 V7 H2.5" stroke="#000" stroke-width="1.7" fill="none"/></svg>
<div class="a" style="left:0px;top:96px;width:810px;height:28px;background:#efefef;border-top:1px solid #fff;border-right:1px solid #888;border-bottom:1px solid #9a9a9a"></div>
<svg style="left:0px;top:0px" width="420" height="130"><path d="M-6 102 H2 L5 105 V117 H-6 Z" fill="#fff" stroke="#4a6fa8" stroke-width="1"/><path d="M11 106 H17 L19 108 H25 V116 H11 Z" fill="#f6d66a" stroke="#b08a20" stroke-width="1"/><path d="M11 116 L14 110 H27 L24 116 Z" fill="#fbe9a0" stroke="#b08a20" stroke-width="1"/><path d="M19 105 Q22 101 25 104" stroke="#6a8ab8" stroke-width="1.2" fill="none"/><rect x="35" y="102" width="14" height="15" fill="#4a4ab8" stroke="#2a2a7a"/><rect x="38" y="103" width="8" height="6" fill="#fff"/><rect x="39" y="112" width="6" height="4" fill="#ddd"/><path d="M60 102 H68 V108 H60 Z" fill="#fff" stroke="#999"/><path d="M57 108 H72 V115 H57 Z" fill="#b8b8b8" stroke="#777"/><rect x="59" y="114" width="11" height="4" fill="#ddd" stroke="#888"/><path d="M80.5 99 V120" stroke="#aaa"/><path d="M93 102 V115 L96 112 L99 117 L101 116 L98 111 L102 111 Z" fill="#fff" stroke="#000" stroke-width="1"/><path d="M111.5 99 V120" stroke="#aaa"/><path d="M129 111 L135 117" stroke="#e0902a" stroke-width="3"/><circle cx="125" cy="107" r="5.5" fill="#eef4ff" stroke="#4a7ac8" stroke-width="1.3"/><path d="M122 107 H128 M125 104 V110" stroke="#2a5ab0" stroke-width="1.4"/><path d="M152 111 L158 117" stroke="#e0902a" stroke-width="3"/><circle cx="148" cy="107" r="5.5" fill="#eef4ff" stroke="#4a7ac8" stroke-width="1.3"/><path d="M145 107 H151" stroke="#2a5ab0" stroke-width="1.4"/><path d="M167 110 Q166 105 168 104 L169 108 L169 102 Q171 101 172 103 L172 108 L173 101 Q175 100 176 102 L176 108 L177 103 Q179 102 180 104 L180 112 Q179 117 174 118 Q169 118 167 114 Z" fill="#f6d8b8" stroke="#3a5ab0" stroke-width="1"/><path d="M190 104 A7 7 0 1 0 198 102" stroke="#3a5a90" stroke-width="2.2" fill="none"/><path d="M196 99 L200 102 L195 105 Z" fill="#3a5a90"/><rect x="194" y="106" width="5" height="5" fill="none" stroke="#3a5a90"/><rect x="217" y="101" width="10" height="9" fill="#f8f0a0" stroke="#8a8040"/><path d="M219 104 H225 M219 107 H225" stroke="#666"/><path d="M212 113 H220 M216 109 V117" stroke="#000" stroke-width="1.6"/><path d="M213 117 Q220 114 226 118" stroke="#3050c0" fill="none"/><path d="M236 116 L242 110" stroke="#444" stroke-width="3.5" stroke-linecap="round"/><path d="M242 110 L251 101" stroke="#3a5ab8" stroke-width="3"/><path d="M243 109 L250 102" stroke="#dfe6ff" stroke-width="1.2"/><rect x="246" y="112" width="6" height="6" fill="#e01010"/><path d="M258 109 H262 L260 112 Z" fill="#333"/><path d="M269.5 99 V120" stroke="#aaa"/><rect x="279.5" y="101.5" width="11" height="9" fill="#fff" stroke="#3a5a98"/><rect x="277.5" y="104.5" width="11" height="9" fill="#eef" stroke="#3a5a98"/><ellipse cx="281" cy="114.5" rx="3.5" ry="2.2" fill="none" stroke="#4a6aa8" stroke-width="1.5"/><ellipse cx="287.5" cy="114.5" rx="3.5" ry="2.2" fill="none" stroke="#4a6aa8" stroke-width="1.5"/><path d="M300.5 99 V120" stroke="#aaa"/><defs><linearGradient id="cb0" x1="0" y1="0" x2="0" y2="1"><stop offset="0" stop-color="#7a88e8"/><stop offset=".5" stop-color="#a8e0d0"/><stop offset="1" stop-color="#f4c080"/></linearGradient></defs><rect x="311.5" y="101.5" width="9" height="15" fill="url(#cb0)" stroke="#3a4a80" stroke-width="1.3"/><rect x="331.5" y="101.5" width="14" height="15" fill="#fff" stroke="#3a4a80" stroke-width="1.3"/><rect x="333" y="104" width="5" height="4" fill="#e06a6a"/><rect x="333" y="110" width="5" height="4" fill="#6a70e0"/><path d="M340 105.5 H344 M340 111.5 H344" stroke="#111" stroke-width="1.2"/><path d="M354.5 99 V120" stroke="#aaa"/><rect x="365.5" y="104.5" width="10" height="10" fill="#a8a8a8" stroke="#8c8c8c"/><rect x="385" y="102" width="15" height="14" fill="#2a4080"/><rect x="386" y="103" width="13" height="1" fill="#4a70c8"/><rect x="386" y="104" width="2" height="8" fill="#f4f0e0"/><rect x="397" y="104" width="2" height="8" fill="#f4f0e0"/><rect x="389" y="104.5" width="7" height="7.5" fill="#fff"/><rect x="386" y="113" width="13" height="2" fill="#e8e0c0"/></svg>
<div class="a" style="left:0px;top:124px;width:810px;height:435px;background:#f0f0f0;border-right:1px solid #777;border-bottom:1px solid #777"></div>
<svg style="left:0;top:0" width="815" height="565"><rect x="92.5" y="201.5" width="638" height="96" fill="#fff" stroke="#262626" stroke-width="1"/><path d="M92.5 202 V208 M92.5 297 V291" stroke="#262626"/><path d="M219.9 202 V208 M219.9 297 V291" stroke="#262626"/><path d="M347.3 202 V208 M347.3 297 V291" stroke="#262626"/><path d="M474.7 202 V208 M474.7 297 V291" stroke="#262626"/><path d="M602.1 202 V208 M602.1 297 V291" stroke="#262626"/><path d="M729.5 202 V208 M729.5 297 V291" stroke="#262626"/><path d="M93 297.5 H99 M730 297.5 H724" stroke="#262626"/><path d="M93 249.8 H99 M730 249.8 H724" stroke="#262626"/><path d="M93 202.0 H99 M730 202.0 H724" stroke="#262626"/><polyline points="93.0,275.1 95.7,275.6 98.5,280.4 101.2,279.3 103.9,280.3 106.6,278.3 109.4,275.5 112.1,278.2 114.8,276.0 117.5,279.7 120.3,278.8 123.0,275.6 125.7,277.4 128.4,277.8 131.2,278.2 133.9,273.9 136.6,277.0 139.3,277.4 142.1,277.6 144.8,277.3 147.5,272.7 150.2,273.0 153.0,273.3 155.7,277.4 158.4,275.7 161.1,272.5 163.9,271.9 166.6,272.0 169.3,275.1 172.0,272.6 174.8,272.4 177.5,271.7 180.2,275.8 182.9,272.3 185.7,271.8 188.4,272.2 191.1,274.2 193.8,271.1 196.6,272.8 199.3,270.8 202.0,271.1 204.7,270.2 207.5,271.0 210.2,270.4 212.9,272.2 215.6,272.4 218.4,272.1 221.1,269.6 223.8,269.8 226.5,269.2 229.3,268.5 232.0,268.3 234.7,268.3 237.4,268.1 240.2,267.6 242.9,269.6 245.6,269.6 248.3,269.1 251.1,269.2 253.8,268.8 256.5,266.7 259.2,266.1 262.0,268.5 264.7,266.3 267.4,266.5 270.1,266.3 272.9,268.3 275.6,265.7 278.3,265.0 281.0,266.5 283.8,266.9 286.5,264.3 289.2,266.8 291.9,264.4 294.7,263.2 297.4,263.5 300.1,265.8 302.8,263.0 305.6,263.3 308.3,265.0 311.0,262.3 313.7,264.2 316.5,264.5 319.2,262.0 321.9,263.8 324.6,260.5 327.4,263.2 330.1,260.5 332.8,262.3 335.5,262.2 338.3,259.6 341.0,262.0 343.7,259.0 346.4,260.8 349.2,259.2 351.9,260.7 354.6,258.5 357.3,260.0 360.1,258.0 362.8,257.3 365.5,257.8 368.3,258.5 371.0,258.3 373.7,256.5 376.4,257.9 379.2,255.8 381.9,257.6 384.6,257.4 387.3,256.7 390.1,256.4 392.8,255.0 395.5,254.3 398.2,255.8 401.0,255.7 403.7,254.7 406.4,252.9 409.1,254.5 411.9,252.4 414.6,252.5 417.3,253.1 420.0,253.2 422.8,252.8 425.5,252.9 428.2,251.9 430.9,251.8 433.7,251.9 436.4,250.0 439.1,249.2 441.8,251.1 444.6,248.5 447.3,248.2 450.0,249.8 452.7,249.7 455.5,249.2 458.2,248.5 460.9,246.8 463.6,248.2 466.4,246.1 469.1,245.7 471.8,247.5 474.5,246.6 477.3,245.3 480.0,246.1 482.7,246.0 485.4,245.4 488.2,245.3 490.9,243.2 493.6,242.9 496.3,244.2 499.1,241.8 501.8,243.7 504.5,243.0 507.2,241.2 510.0,242.5 512.7,240.8 515.4,239.8 518.1,241.6 520.9,239.6 523.6,240.9 526.3,240.4 529.0,239.7 531.8,238.2 534.5,238.8 537.2,236.7 539.9,236.9 542.7,237.8 545.4,237.8 548.1,237.1 550.8,235.3 553.6,236.3 556.3,234.5 559.0,235.4 561.7,235.7 564.5,234.6 567.2,233.4 569.9,234.0 572.6,234.0 575.4,231.9 578.1,231.2 580.8,232.4 583.5,232.1 586.3,231.6 589.0,231.5 591.7,229.8 594.4,230.2 597.2,230.1 599.9,227.8 602.6,227.5 605.3,227.3 608.1,228.6 610.8,228.5 613.5,227.5 616.2,227.1 619.0,225.2 621.7,226.3 624.4,225.9 627.1,226.1 629.9,224.8 632.6,224.8 635.3,224.8 638.1,224.1 640.8,221.8 643.5,221.2 646.2,221.0 649.0,222.1 651.7,221.7 654.4,219.4 657.1,220.5 659.9,219.0 662.6,219.7 665.3,217.8 668.0,217.5 670.8,217.6 673.5,218.0 676.2,216.7 678.9,215.5 681.7,215.6 684.4,215.2 687.1,215.6 689.8,214.4 692.6,213.6 695.3,214.5 698.0,213.9 700.7,213.5 703.5,213.2 706.2,211.4 708.9,212.0 711.6,212.0 714.4,209.7 717.1,209.7 719.8,210.1" fill="none" stroke="#0072bd" stroke-width="1"/><rect x="92.5" y="406.5" width="638" height="96" fill="#fff" stroke="#262626" stroke-width="1"/><path d="M131.9 407 V413 M131.9 502 V496" stroke="#262626"/><path d="M218.2 407 V413 M218.2 502 V496" stroke="#262626"/><path d="M304.5 407 V413 M304.5 502 V496" stroke="#262626"/><path d="M390.8 407 V413 M390.8 502 V496" stroke="#262626"/><path d="M477.1 407 V413 M477.1 502 V496" stroke="#262626"/><path d="M563.4 407 V413 M563.4 502 V496" stroke="#262626"/><path d="M649.7 407 V413 M649.7 502 V496" stroke="#262626"/><path d="M93 413.8 H99 M730 413.8 H724" stroke="#262626"/><path d="M93 435.5 H99 M730 435.5 H724" stroke="#262626"/><path d="M93 457.2 H99 M730 457.2 H724" stroke="#262626"/><path d="M93 479.0 H99 M730 479.0 H724" stroke="#262626"/><path d="M93 500.8 H99 M730 500.8 H724" stroke="#262626"/><clipPath id="c2"><rect x="93" y="408" width="637" height="93"/></clipPath><polyline clip-path="url(#c2)" points="83.9,452.9 88.2,453.7 92.6,454.4 96.9,455.2 101.2,455.9 105.5,456.6 109.8,457.3 114.1,457.9 118.5,458.6 122.8,459.2 127.1,459.8 131.4,460.4 135.7,461.0 140.0,461.5 144.3,462.1 148.7,462.6 153.0,463.1 157.3,463.6 161.6,464.0 165.9,464.5 170.2,464.9 174.5,465.3 178.9,465.7 183.2,466.1 187.5,466.5 191.8,466.8 196.1,467.1 200.4,467.4 204.8,467.7 209.1,468.0 213.4,468.2 217.7,468.5 222.0,468.7 226.3,468.9 230.6,469.0 235.0,469.2 239.3,469.3 243.6,469.5 247.9,469.6 252.2,469.6 256.5,469.7 260.8,469.8 265.2,469.8 269.5,469.8 273.8,469.8 278.1,469.8 282.4,469.7 286.7,469.7 291.1,469.6 295.4,469.5 299.7,469.4 304.0,469.2 308.3,469.1 312.6,468.9 316.9,468.7 321.3,468.5 325.6,468.3 329.9,468.1 334.2,467.8 338.5,467.5 342.8,467.2 347.1,466.9 351.5,466.6 355.8,466.2 360.1,465.9 364.4,465.5 368.7,465.1 373.0,464.7 377.4,464.2 381.7,463.8 386.0,463.3 390.3,462.8 394.6,462.3 398.9,461.8 403.2,461.2 407.6,460.6 411.9,460.1 416.2,459.5 420.5,458.8 424.8,458.2 429.1,457.5 433.5,456.9 437.8,456.2 442.1,455.5 446.4,454.7 450.7,454.0 455.0,453.2 459.3,452.4 463.7,451.6 468.0,450.8 472.3,450.0 476.6,449.1 480.9,448.2 485.2,447.3 489.5,446.4 493.9,445.5 498.2,444.5 502.5,443.6 506.8,442.6 511.1,441.6 515.4,440.6 519.7,439.5 524.1,438.5 528.4,437.4 532.7,436.3 537.0,435.2 541.3,434.1 545.6,432.9 550.0,431.8 554.3,430.6 558.6,429.4 562.9,428.2 567.2,426.9 571.5,425.7 575.8,424.4 580.2,423.1 584.5,421.8 588.8,420.5 593.1,419.1 597.4,417.8 601.7,416.4 606.0,415.0 610.4,413.5 614.7,412.1 619.0,410.7 623.3,409.2" fill="none" stroke="#0072bd" stroke-width="1.1"/><polygon points="304.0,464.4 305.3,464.8 306.6,464.4 307.9,464.9 309.2,464.3 310.5,464.2 311.8,464.1 313.1,464.4 314.4,465.5 315.7,464.9 316.9,463.9 318.2,464.3 319.5,464.1 320.8,465.3 322.1,463.8 323.4,464.2 324.7,464.9 326.0,464.5 327.3,464.4 328.6,464.5 329.9,463.0 331.2,464.0 332.5,463.4 333.8,463.4 335.1,464.3 336.4,463.9 337.7,463.7 339.0,464.2 340.2,463.6 341.5,462.8 342.8,463.4 344.1,463.0 345.4,463.5 346.7,463.3 348.0,461.9 349.3,462.6 350.6,461.6 351.9,462.8 353.2,461.5 354.5,462.0 355.8,462.0 357.1,462.6 358.4,461.8 359.7,461.4 361.0,460.9 362.3,462.3 363.5,461.4 364.8,461.6 366.1,461.4 367.4,460.4 368.7,460.4 370.0,461.5 371.3,460.3 372.6,460.9 373.9,460.6 375.2,460.1 376.5,460.2 377.8,460.8 379.1,459.2 380.4,458.9 381.7,460.0 383.0,460.0 384.3,458.5 385.6,458.6 386.8,458.3 388.1,458.8 389.4,459.5 390.7,458.6 392.0,458.1 393.3,459.1 394.6,458.8 395.9,458.2 397.2,457.3 398.5,458.0 399.8,457.8 401.1,457.5 402.4,457.7 403.7,456.2 405.0,457.3 406.3,455.7 407.6,457.1 408.9,457.0 410.1,456.8 411.4,456.3 412.7,455.0 414.0,455.7 415.3,455.3 416.6,455.5 417.9,455.4 419.2,455.5 420.5,454.4 421.8,455.0 423.1,454.7 424.4,454.2 425.7,453.2 427.0,454.5 428.3,453.1 429.6,453.3 430.9,454.0 432.2,452.1 433.4,452.0 434.7,452.9 436.0,452.9 437.3,451.7 438.6,451.4 439.9,451.1 441.2,451.3 442.5,450.7 443.8,450.2 445.1,451.1 446.4,451.0 447.7,449.9 449.0,450.8 450.3,449.7 451.6,450.1 452.9,450.3 454.2,449.2 455.5,448.7 456.8,448.7 458.0,448.9 459.3,447.9 460.6,448.8 461.9,447.4 463.2,447.9 464.5,446.5 465.8,447.8 467.1,446.9 468.4,447.1 469.7,445.8 471.0,446.5 472.3,446.1 473.6,446.0 474.9,444.8 476.2,444.2 477.5,445.3 478.8,444.6 480.1,443.4 481.3,444.1 482.6,442.8 483.9,444.2 485.2,443.3 486.5,442.2 487.8,441.7 489.1,442.6 490.4,441.3 491.7,442.6 493.0,441.7 494.3,441.5 495.6,441.8 496.9,440.9 498.2,441.0 499.5,440.6 500.8,439.2 502.1,439.6 503.4,439.2 504.6,438.1 505.9,438.8 507.2,439.1 508.5,437.4 509.8,438.5 511.1,438.2 512.4,437.5 513.7,436.1 515.0,436.9 516.3,436.0 517.6,435.5 518.9,435.9 520.2,434.8 521.5,434.7 521.5,444.1 520.2,444.4 518.9,443.1 517.6,443.9 516.3,444.1 515.0,445.7 513.7,444.9 512.4,445.9 511.1,446.6 509.8,445.3 508.5,446.9 507.2,446.5 505.9,447.7 504.6,446.7 503.4,447.4 502.1,447.1 500.8,448.7 499.5,448.2 498.2,449.6 496.9,449.9 495.6,448.9 494.3,449.0 493.0,449.7 491.7,450.5 490.4,450.9 489.1,450.1 487.8,451.8 486.5,451.7 485.2,452.3 483.9,451.0 482.6,451.4 481.3,451.8 480.1,452.0 478.8,453.2 477.5,452.6 476.2,453.4 474.9,453.3 473.6,453.4 472.3,454.7 471.0,455.3 469.7,454.7 468.4,455.4 467.1,455.5 465.8,455.1 464.5,455.2 463.2,456.2 461.9,456.0 460.6,456.4 459.3,456.3 458.0,457.7 456.8,456.6 455.5,458.0 454.2,458.4 452.9,457.4 451.6,458.2 450.3,458.0 449.0,458.5 447.7,458.0 446.4,459.2 445.1,458.5 443.8,459.6 442.5,459.1 441.2,459.0 439.9,459.9 438.6,460.5 437.3,461.2 436.0,460.7 434.7,460.1 433.4,461.9 432.2,461.8 430.9,461.3 429.6,461.8 428.3,462.6 427.0,461.2 425.7,462.9 424.4,463.3 423.1,462.5 421.8,462.4 420.5,463.7 419.2,463.2 417.9,464.2 416.6,462.8 415.3,463.6 414.0,463.8 412.7,464.6 411.4,464.4 410.1,464.0 408.9,464.4 407.6,464.3 406.3,464.9 405.0,465.9 403.7,465.3 402.4,465.0 401.1,465.1 399.8,466.0 398.5,466.3 397.2,467.0 395.9,466.0 394.6,466.4 393.3,467.4 392.0,466.4 390.7,467.4 389.4,467.5 388.1,467.6 386.8,468.2 385.6,467.8 384.3,468.4 383.0,467.6 381.7,468.0 380.4,467.7 379.1,467.9 377.8,467.7 376.5,468.1 375.2,468.4 373.9,469.7 372.6,468.7 371.3,469.8 370.0,469.9 368.7,469.9 367.4,468.5 366.1,469.2 364.8,469.0 363.5,469.7 362.3,469.0 361.0,470.0 359.7,469.6 358.4,470.9 357.1,470.9 355.8,471.3 354.5,469.9 353.2,470.1 351.9,470.2 350.6,470.8 349.3,471.5 348.0,470.2 346.7,472.0 345.4,472.0 344.1,471.3 342.8,471.5 341.5,471.8 340.2,471.9 339.0,470.9 337.7,471.9 336.4,472.3 335.1,471.3 333.8,472.3 332.5,472.6 331.2,472.2 329.9,472.3 328.6,472.8 327.3,472.8 326.0,471.7 324.7,473.0 323.4,472.9 322.1,472.7 320.8,473.3 319.5,472.8 318.2,473.1 316.9,473.0 315.7,472.3 314.4,472.4 313.1,472.6 311.8,473.5 310.5,473.4 309.2,473.8 307.9,473.3 306.6,472.7 305.3,473.8 304.0,474.2" fill="#ff0000"/></svg>
<div class="t" style="left:377px;top:181px;font-size:15px;color:#000;font-weight:bold;">Line scan</div>
<div class="t" style="left:93px;top:187px;font-size:12px;color:#444;font-weight:normal;">&times;</div>
<div class="t" style="left:102px;top:185px;font-size:13px;color:#262626;font-weight:normal;">10</div>
<div class="t" style="left:117px;top:180px;font-size:10px;color:#262626;font-weight:normal;">-6</div>
<div class="t" style="left:79px;top:196px;font-size:12.5px;color:#262626;font-weight:normal;">1</div>
<div class="t" style="left:67px;top:243px;font-size:12.5px;color:#262626;font-weight:normal;">0.5</div>
<div class="t" style="left:79px;top:291px;font-size:12.5px;color:#262626;font-weight:normal;">0</div>
<div class="t" style="left:74.0px;top:306px;width:40px;text-align:center;font-size:12.5px;color:#262626">0</div>
<div class="t" style="left:201.4px;top:306px;width:40px;text-align:center;font-size:12.5px;color:#262626">0.5</div>
<div class="t" style="left:328.8px;top:306px;width:40px;text-align:center;font-size:12.5px;color:#262626">1</div>
<div class="t" style="left:456.2px;top:306px;width:40px;text-align:center;font-size:12.5px;color:#262626">1.5</div>
<div class="t" style="left:583.6px;top:306px;width:40px;text-align:center;font-size:12.5px;color:#262626">2</div>
<div class="t" style="left:711.0px;top:306px;width:40px;text-align:center;font-size:12.5px;color:#262626">2.5</div>
<div class="t" style="left:696px;top:330px;font-size:12px;color:#444;font-weight:normal;">&times;</div>
<div class="t" style="left:705px;top:328px;font-size:13px;color:#262626;font-weight:normal;">10</div>
<div class="t" style="left:720px;top:323px;font-size:10px;color:#262626;font-weight:normal;">-3</div>
<div class="t" style="left:111px;top:346px;width:600px;text-align:center;font-size:15px;font-weight:bold;color:#000">Fitting</div>
<div class="t" style="left:111px;top:366px;width:600px;text-align:center;font-size:15px;font-weight:bold;color:#000">Radius of curvature = 5.7154m</div>
<div class="t" style="left:111px;top:386px;width:600px;text-align:center;font-size:15px;font-weight:bold;color:#000">Fitting Score = 0.029746</div>
<div class="t" style="left:93px;top:393px;font-size:12px;color:#444;font-weight:normal;">&times;</div>
<div class="t" style="left:102px;top:391px;font-size:13px;color:#262626;font-weight:normal;">10</div>
<div class="t" style="left:117px;top:386px;font-size:10px;color:#262626;font-weight:normal;">-7</div>
<div class="t" style="left:40px;top:406px;width:47px;text-align:right;font-size:12.5px;color:#262626">15</div>
<div class="t" style="left:40px;top:428px;width:47px;text-align:right;font-size:12.5px;color:#262626">10</div>
<div class="t" style="left:40px;top:449px;width:47px;text-align:right;font-size:12.5px;color:#262626">5</div>
<div class="t" style="left:40px;top:471px;width:47px;text-align:right;font-size:12.5px;color:#262626">0</div>
<div class="t" style="left:40px;top:493px;width:47px;text-align:right;font-size:12.5px;color:#262626">-5</div>
<div class="t" style="left:111.4px;top:512px;width:40px;text-align:center;font-size:12.5px;color:#262626">-2</div>
<div class="t" style="left:197.7px;top:512px;width:40px;text-align:center;font-size:12.5px;color:#262626">-1</div>
<div class="t" style="left:285.0px;top:512px;width:40px;text-align:center;font-size:12.5px;color:#262626">0</div>
<div class="t" style="left:371.3px;top:512px;width:40px;text-align:center;font-size:12.5px;color:#262626">1</div>
<div class="t" style="left:457.6px;top:512px;width:40px;text-align:center;font-size:12.5px;color:#262626">2</div>
<div class="t" style="left:543.9px;top:512px;width:40px;text-align:center;font-size:12.5px;color:#262626">3</div>
<div class="t" style="left:630.2px;top:512px;width:40px;text-align:center;font-size:12.5px;color:#262626">4</div>
<div class="t" style="left:696px;top:537px;font-size:12px;color:#444;font-weight:normal;">&times;</div>
<div class="t" style="left:705px;top:535px;font-size:13px;color:#262626;font-weight:normal;">10</div>
<div class="t" style="left:720px;top:530px;font-size:10px;color:#262626;font-weight:normal;">-3</div>
<div class="a" style="left:15px;top:603px;width:672px;height:316px;box-shadow:2px 3px 9px rgba(0,0,0,.45);border:1px solid #3c4450;border-radius:7px;background:linear-gradient(#ffffff,#fafafa 28px,#f4f4f4 29px)"></div>
<svg style="left:23px;top:609px" width="16" height="16" viewBox="0 0 16 16"><rect x="0.5" y="0.5" width="15" height="15" fill="#f2f2f2" stroke="#999"/><rect x="1" y="1" width="14" height="2" fill="#88a8c8"/><path d="M2 11 L7 9 L9 13 Z" fill="#3d86cf"/><path d="M7 9 L10 4 L14 13 L11 11 L9 13 Z" fill="#d8541b"/><path d="M10 4 L14 13 L12 9 Z" fill="#f4b02a"/></svg>
<div class="t" style="left:44px;top:611px;font-size:12.5px;color:#000;font-weight:normal;">Slider</div>
<div class="a" style="left:577px;top:603px;width:103px;height:19px;border:1px solid #8a94a4;border-top:none;border-radius:0 0 4px 4px;background:linear-gradient(#fafafa,#ececec)"></div>
<div class="a" style="left:604px;top:603px;width:1px;height:18px;background:#b0b8c4"></div>
<div class="a" style="left:631px;top:603px;width:1px;height:18px;background:#b0b8c4"></div>
<div class="a" style="left:585px;top:614px;width:12px;height:5px;border:1px solid #3a4058"></div>
<div class="a" style="left:612px;top:607px;width:12px;height:10px;border:1px solid #b8bcc4;box-shadow:inset 0 0 0 2px #f0f0f0,inset 0 0 0 3px #b8bcc4"></div>
<svg style="left:649px;top:607px" width="13" height="11" viewBox="-0.5 -0.5 13 11"><path d="M0.5 0.5 H3.8 L6 3.2 L8.2 0.5 H11.5 L7.8 5 L11.5 9.5 H8.2 L6 6.8 L3.8 9.5 H0.5 L4.2 5 Z" fill="#fff" stroke="#3a4058" stroke-width="1.2" stroke-linejoin="round"/></svg>
<div class="a" style="left:22px;top:631px;width:658px;height:281px;background:#f0f0f0;border:1px solid #777"></div>
<div class="t" style="left:69px;top:660px;font-size:15px;color:#000;font-weight:normal;">Y</div>
<div class="t" style="left:228px;top:650px;font-size:18.5px;color:#000;font-weight:normal;">move line</div>
<div class="t" style="left:337px;top:651px;font-size:16px;color:#000;font-weight:normal;">X: 802</div>
<div class="t" style="left:578px;top:656px;font-size:14.5px;color:#000;font-weight:normal;">In Y verk&uuml;rzen</div>
<div class="a" style="left:49px;top:681px;width:51px;height:15px;background:#f0f0f0;border-top:1px solid #fff;border-left:1px solid #fff;border-right:2px solid #6a6a6a;border-bottom:2px solid #6a6a6a"></div>
<svg style="left:70px;top:686px" width="9" height="5"><path d="M0 4H8L4 0Z" fill="#555"/></svg>
<div class="a" style="left:49px;top:696px;width:51px;height:57px;background:#e4e4e4;border-left:1px solid #777;border-right:2px solid #6a6a6a"></div>
<div class="a" style="left:49px;top:753px;width:51px;height:8px;background:#f0f0f0;border-top:1px solid #fff;border-left:1px solid #fff;border-right:2px solid #6a6a6a;border-bottom:2px solid #6a6a6a"></div>
<div class="a" style="left:49px;top:761px;width:51px;height:56px;background:#e4e4e4;border-left:1px solid #777;border-right:2px solid #6a6a6a"></div>
<div class="a" style="left:49px;top:817px;width:51px;height:15px;background:#f0f0f0;border-top:1px solid #fff;border-left:1px solid #fff;border-right:2px solid #6a6a6a;border-bottom:2px solid #6a6a6a"></div>
<svg style="left:70px;top:822px" width="9" height="5"><path d="M0 0H8L4 4Z" fill="#555"/></svg>
<div class="a" style="left:603px;top:681px;width:51px;height:15px;background:#f0f0f0;border-top:1px solid #fff;border-left:1px solid #fff;border-right:2px solid #6a6a6a;border-bottom:2px solid #6a6a6a"></div>
<svg style="left:624px;top:686px" width="9" height="5"><path d="M0 4H8L4 0Z" fill="#555"/></svg>
<div class="a" style="left:603px;top:696px;width:51px;height:57px;background:#e4e4e4;border-left:1px solid #777;border-right:2px solid #6a6a6a"></div>
<div class="a" style="left:603px;top:753px;width:51px;height:8px;background:#f0f0f0;border-top:1px solid #fff;border-left:1px solid #fff;border-right:2px solid #6a6a6a;border-bottom:2px solid #6a6a6a"></div>
<div class="a" style="left:603px;top:761px;width:51px;height:56px;background:#e4e4e4;border-left:1px solid #777;border-right:2px solid #6a6a6a"></div>
<div class="a" style="left:603px;top:817px;width:51px;height:15px;background:#f0f0f0;border-top:1px solid #fff;border-left:1px solid #fff;border-right:2px solid #6a6a6a;border-bottom:2px solid #6a6a6a"></div>
<svg style="left:624px;top:822px" width="9" height="5"><path d="M0 0H8L4 4Z" fill="#555"/></svg>
<div class="a" style="left:122px;top:683px;width:15px;height:48px;background:#f0f0f0;border-top:1px solid #fff;border-left:1px solid #fff;border-bottom:2px solid #6a6a6a;border-right:2px solid #6a6a6a"></div>
<svg style="left:127px;top:703px" width="5" height="9"><path d="M4 0V8L0 4Z" fill="#555"/></svg>
<div class="a" style="left:137px;top:683px;width:98px;height:48px;background:#e4e4e4;border-top:1px solid #777;border-bottom:2px solid #6a6a6a"></div>
<div class="a" style="left:235px;top:683px;width:21px;height:48px;background:#f0f0f0;border-top:1px solid #fff;border-left:1px solid #fff;border-bottom:2px solid #6a6a6a;border-right:2px solid #6a6a6a"></div>
<div class="a" style="left:256px;top:683px;width:141px;height:48px;background:#e4e4e4;border-top:1px solid #777;border-bottom:2px solid #6a6a6a"></div>
<div class="a" style="left:397px;top:683px;width:16px;height:48px;background:#f0f0f0;border-top:1px solid #fff;border-left:1px solid #fff;border-bottom:2px solid #6a6a6a;border-right:2px solid #6a6a6a"></div>
<svg style="left:402px;top:703px" width="5" height="9"><path d="M0 0V8L4 4Z" fill="#555"/></svg>
<div class="a" style="left:437px;top:682px;width:148px;height:48px;border:1px solid #707070;border-radius:3px;background:linear-gradient(#f2f2f2 0%,#ebebeb 50%,#dddddd 51%,#d2d2d2 100%)"></div>
<div class="t" style="left:437px;top:699px;width:148px;text-align:center;font-size:16px;color:#000">Werte speichern</div>
<div class="t" style="left:138px;top:762px;font-size:16px;color:#000;font-weight:normal;">X1:</div>
<div class="t" style="left:287px;top:762px;font-size:16px;color:#000;font-weight:normal;">X2:</div>
<div class="a" style="left:137px;top:782px;width:99px;height:48px;border:1px solid #707070;border-radius:3px;background:linear-gradient(#f2f2f2 0%,#ebebeb 50%,#dddddd 51%,#d2d2d2 100%)"></div>
<div class="t" style="left:137px;top:801px;width:99px;text-align:center;font-size:11px;color:#000">Interval Grenze 1</div>
<div class="a" style="left:287px;top:782px;width:99px;height:48px;border:1px solid #707070;border-radius:3px;background:linear-gradient(#f2f2f2 0%,#ebebeb 50%,#dddddd 51%,#d2d2d2 100%)"></div>
<div class="t" style="left:287px;top:801px;width:99px;text-align:center;font-size:11px;color:#000">Interval Grenze 2</div>
<div class="a" style="left:437px;top:782px;width:122px;height:48px;border:1px solid #707070;border-radius:3px;background:linear-gradient(#f2f2f2 0%,#ebebeb 50%,#dddddd 51%,#d2d2d2 100%)"></div>
<div class="t" style="left:437px;top:801px;width:122px;text-align:center;font-size:11px;color:#000">Mittelwert berechnen</div>
<div class="t" style="left:437px;top:838px;font-size:15.4px;color:#000;font-weight:normal;">Mittelwert:</div>
<div class="a" style="left:51px;top:859px;width:149px;height:48px;border:1px solid #707070;border-radius:3px;background:linear-gradient(#f2f2f2 0%,#ebebeb 50%,#dddddd 51%,#d2d2d2 100%)"></div>
<div class="t" style="left:51px;top:878px;width:149px;text-align:center;font-size:11px;color:#000">Auto Linescan</div>
</body></html>
